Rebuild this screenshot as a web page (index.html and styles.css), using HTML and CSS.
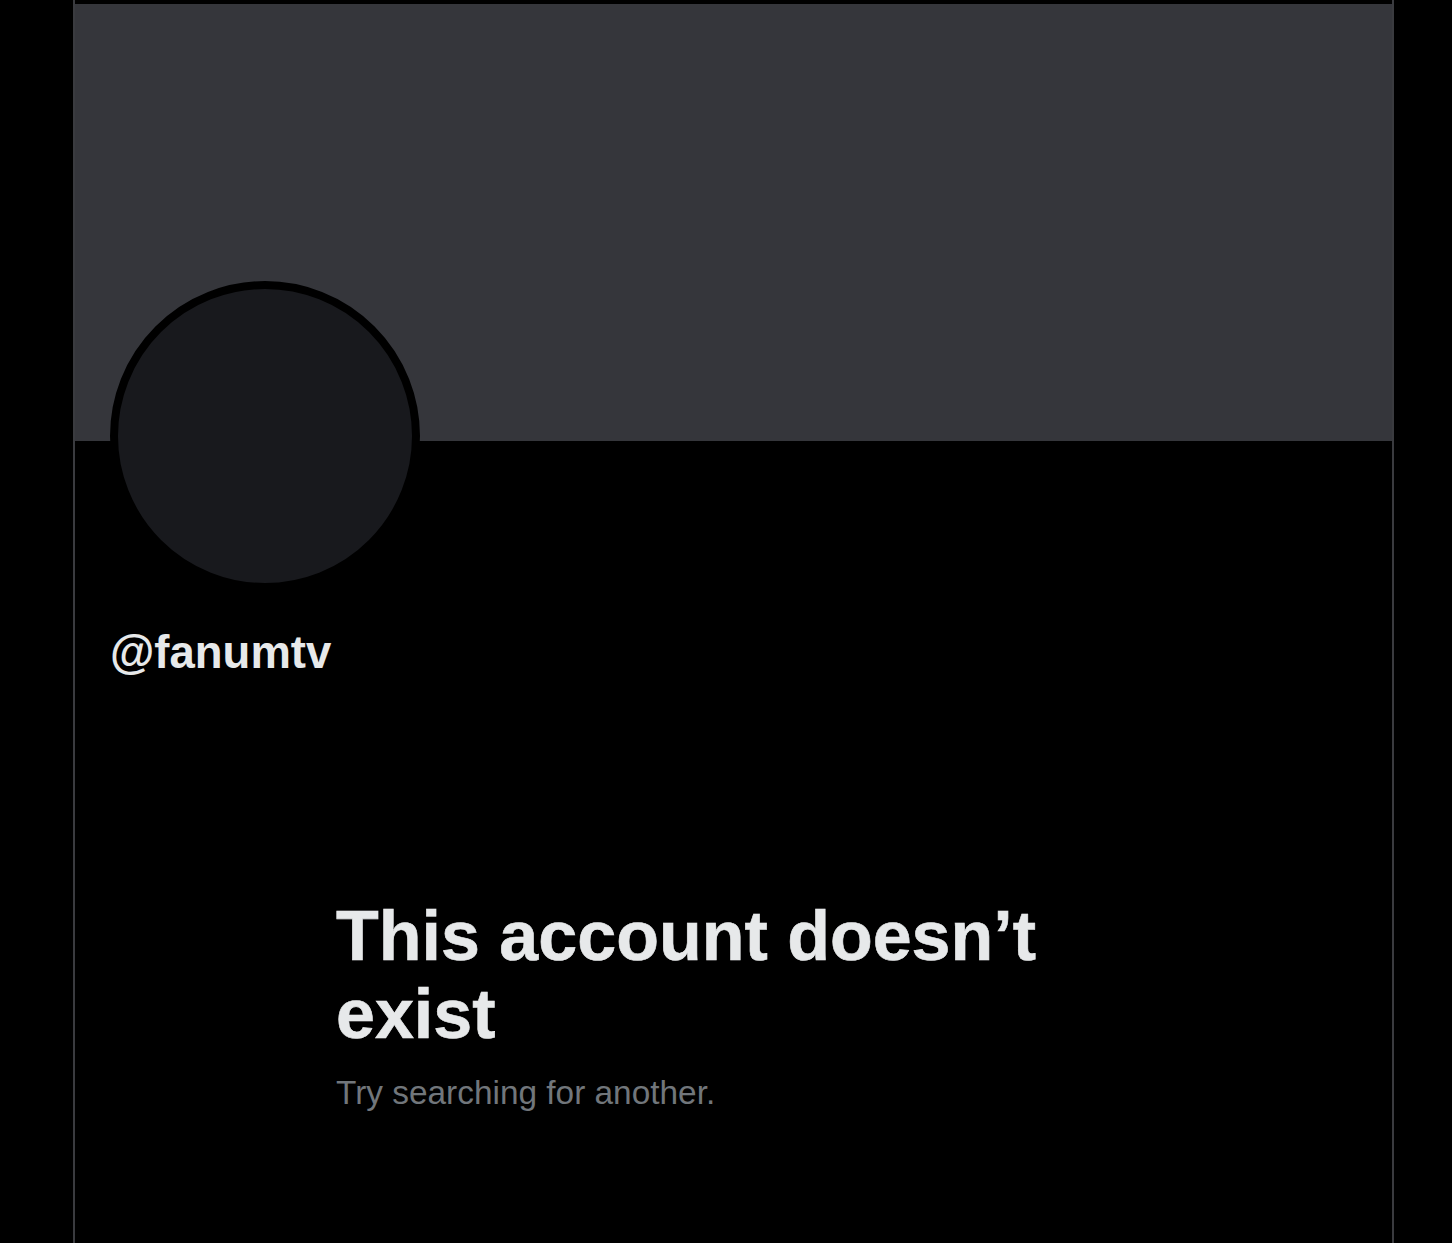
FILE: index.html
```html
<!DOCTYPE html>
<html lang="en">
<head>
<meta charset="utf-8">
<title>@fanumtv</title>
<link rel="stylesheet" href="styles.css">
</head>
<body>
<main class="column">
  <div class="banner"></div>
  <div class="avatar"></div>
  <div class="handle">@fanumtv</div>
  <section class="empty">
    <h1 class="empty-title">This account doesn’t exist</h1>
    <p class="empty-text">Try searching for another.</p>
  </section>
</main>
</body>
</html>
```
FILE: styles.css
```css
html, body {
  margin: 0;
  padding: 0;
  background: #000;
  height: 100%;
}
body {
  font-family: "Liberation Sans", Arial, sans-serif;
  color: #e7e9ea;
  overflow: hidden;
}
.column {
  box-sizing: border-box;
  margin-left: 73px;
  width: 1321px;
  min-height: 1243px;
  border-left: 2px solid #3a3b3f;
  border-right: 2px solid #3a3b3f;
  padding-top: 4px;
  display: flex;
  flex-direction: column;
}
.banner {
  height: 437px;
  background: #35363b;
}
.avatar {
  box-sizing: border-box;
  width: 310px;
  height: 310px;
  margin-top: -160px;
  margin-left: 35px;
  border-radius: 50%;
  border: 8px solid #000;
  background: #18191d;
}
.handle {
  margin-top: 35px;
  margin-left: 35px;
  font-size: 45.5px;
  line-height: 54px;
  font-weight: 700;
  color: #e7e9ea;
}
.empty {
  margin-top: 217px;
  margin-left: 261px;
  width: 780px;
}
.empty-title {
  margin: 0;
  font-size: 70px;
  line-height: 78px;
  font-weight: 700;
  color: #e7e9ea;
  -webkit-text-stroke: 0.6px #e7e9ea;
}
.empty-text {
  margin: 20px 0 0;
  font-size: 33.4px;
  line-height: 40px;
  color: #71767b;
}
```
